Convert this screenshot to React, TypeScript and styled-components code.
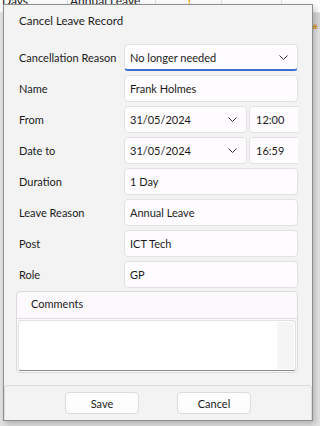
import React from 'react'
import styled, { createGlobalStyle } from 'styled-components'

const GlobalStyle = createGlobalStyle`
  html, body {
    margin: 0;
    padding: 0;
    background: #e4e4e4;
  }
  body {
    font-family: 'Segoe UI', Lato, 'Noto Sans', sans-serif;
    font-size: 11px;
    color: #1b1b1b;
  }
`

const Screen = styled.div`
  position: relative;
  width: 320px;
  height: 426px;
  overflow: hidden;
  background: #e2e2e2;
`

// the grid page that peeks out behind the dialog
const BackRow = styled.div`
  display: flex;
  height: 12px;
  background: #fbfbfb;
  border-bottom: 1px solid #e6e6e6;
`

const BackCell = styled.div<{ w: number }>`
  width: ${(p) => p.w}px;
  flex: none;
  border-right: 1px solid #e0e0e0;
  font-size: 12px;
  line-height: 12px;
  margin-top: -5px;
  padding-left: 2px;
  color: #222;
  box-sizing: border-box;
  overflow: hidden;
  white-space: nowrap;
`

const BackSide = styled.div`
  display: flex;
  justify-content: flex-end;
  height: 16px;
`

const BackHeader = styled.div`
  width: 8px;
  background: #d6d6d6;
  color: #d98b00;
  font-size: 10px;
  line-height: 28px;
  overflow: hidden;
`

const Warn = styled.span`
  color: #e0a000;
  font-weight: bold;
`

const Dialog = styled.div`
  position: absolute;
  left: 3px;
  top: 4px;
  width: 310px;
  height: 417px;
  box-sizing: border-box;
  border: 1px solid #8e8e8e;
  background: #f3f3f3;
  box-shadow: 2px 3px 6px rgba(0, 0, 0, 0.22);
  display: flex;
  flex-direction: column;
`

const Title = styled.div`
  height: 39px;
  padding: 9px 0 0 15px;
  box-sizing: border-box;
  font-size: 11.5px;
`

const Form = styled.div`
  display: grid;
  grid-template-columns: 105px 174px;
  grid-auto-rows: 27px;
  row-gap: 4px;
  padding-left: 15px;
  align-items: center;
`

const Label = styled.div`
  font-size: 11px;
  white-space: nowrap;
`

const Field = styled.div<{ accent?: boolean }>`
  height: 27px;
  box-sizing: border-box;
  background: #fefcfe;
  border: 1px solid #e2e2e2;
  border-bottom: ${(p) => (p.accent ? '2px solid #3c6fcf' : '1px solid #e2e2e2')};
  border-radius: 4px;
  display: flex;
  align-items: center;
  padding: 0 0 0 5px;
  font-size: 11px;
  overflow: hidden;
`

const Value = styled.span`
  flex: 1;
  white-space: nowrap;
`

const Chevron = styled.svg`
  width: 9px;
  height: 5px;
  margin-right: 9px;
  flex: none;
`

const Pair = styled.div`
  display: flex;
  gap: 2px;
  height: 27px;
  overflow: hidden;
`

const DateField = styled(Field)`
  width: 123px;
  flex: none;
`

const TimeField = styled(Field)`
  width: 60px;
  flex: none;
  padding-left: 6px;
`

const Group = styled.div`
  margin: 3px 0 0 12px;
  width: 282px;
  height: 82px;
  box-sizing: border-box;
  border: 1px solid #dadada;
  border-radius: 4px;
  background: #fcf9fc;
  display: flex;
  flex-direction: column;
`

const GroupHead = styled.div`
  height: 27px;
  box-sizing: border-box;
  padding: 5px 0 0 14px;
  border-bottom: 1px solid #dedede;
  font-size: 11px;
`

const TextArea = styled.div`
  flex: 1;
  margin: 1px;
  background: #fff;
  border: 1px solid #e2e2e2;
  border-bottom: 1px solid #8a8a8a;
  border-radius: 3px;
  display: flex;
  justify-content: flex-end;
  padding: 1px;
`

const Track = styled.div`
  width: 17px;
  background: #f5f5f5;
`

const Footer = styled.div`
  margin: auto 0 0 0;
  height: 35px;
  box-sizing: border-box;
  border: 1px solid #dcdcdc;
  border-bottom: none;
  border-radius: 4px 4px 0 0;
  background: #f3f3f3;
  display: flex;
  justify-content: center;
  gap: 38px;
  padding-top: 6px;
`

const Button = styled.button`
  width: 74px;
  height: 22px;
  box-sizing: border-box;
  background: #fdfdfd;
  border: 1px solid #dcdcdc;
  border-radius: 4px;
  font-family: inherit;
  font-size: 11px;
  color: #1b1b1b;
  padding: 0;
`

const Down = () => (
  <Chevron viewBox="0 0 9 5">
    <path d="M0.5 0.5 L4.5 4.5 L8.5 0.5" fill="none" stroke="#333" strokeWidth="1" />
  </Chevron>
)

const rows: { label: string; value: string }[] = [
  { label: 'Duration', value: '1 Day' },
  { label: 'Leave Reason', value: 'Annual Leave' },
  { label: 'Post', value: 'ICT Tech' },
  { label: 'Role', value: 'GP' },
]

const App = () => {
  return (
    <Screen>
      <GlobalStyle />
      <BackRow>
        <BackCell w={68}>Days</BackCell>
        <BackCell w={88}>Annual Leave</BackCell>
        <BackCell w={66} style={{ textAlign: 'center' }}>
          <Warn>!</Warn>
        </BackCell>
        <BackCell w={60} />
      </BackRow>
      <BackSide>
        <BackHeader>#</BackHeader>
      </BackSide>

      <Dialog>
        <Title>Cancel Leave Record</Title>
        <Form>
          <Label>Cancellation Reason</Label>
          <Field accent>
            <Value>No longer needed</Value>
            <Down />
          </Field>

          <Label>Name</Label>
          <Field>
            <Value>Frank Holmes</Value>
          </Field>

          <Label>From</Label>
          <Pair>
            <DateField>
              <Value>31/05/2024</Value>
              <Down />
            </DateField>
            <TimeField>12:00</TimeField>
          </Pair>

          <Label>Date to</Label>
          <Pair>
            <DateField>
              <Value>31/05/2024</Value>
              <Down />
            </DateField>
            <TimeField>16:59</TimeField>
          </Pair>

          {rows.map((r) => (
            <React.Fragment key={r.label}>
              <Label>{r.label}</Label>
              <Field>
                <Value>{r.value}</Value>
              </Field>
            </React.Fragment>
          ))}
        </Form>

        <Group>
          <GroupHead>Comments</GroupHead>
          <TextArea>
            <Track />
          </TextArea>
        </Group>

        <Footer>
          <Button>Save</Button>
          <Button>Cancel</Button>
        </Footer>
      </Dialog>
    </Screen>
  )
}

export default App
